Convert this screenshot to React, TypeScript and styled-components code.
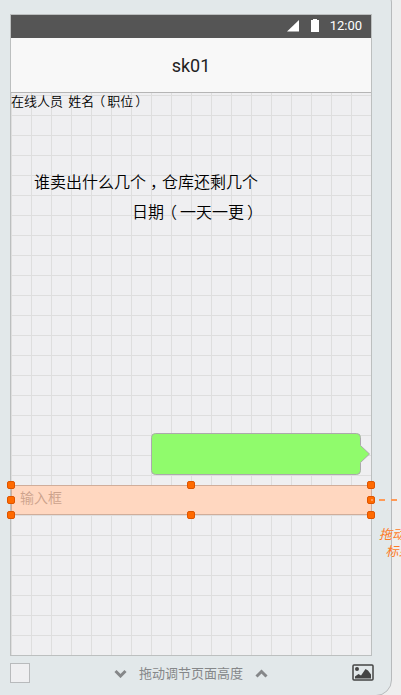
import React from "react";
import styled, { createGlobalStyle } from "styled-components";

const Global = createGlobalStyle`
  * { box-sizing: border-box; }
  html, body { margin: 0; height: 695px; overflow: hidden; background: #eeeeee; }
  body { font-family: "Noto Sans CJK SC", sans-serif; }
`;

const Stage = styled.main`
  width: 401px;
  height: 695px;
  overflow: hidden;
  position: relative;
`;

const Device = styled.section`
  width: 442px;
  height: 710px;
  margin: -14px 0 0 -50px;
  padding: 28px 19px 0 60px;
  background: #e2e8ea;
  border: 1px solid #b8babc;
  border-radius: 16px;
  display: flex;
  flex-direction: column;
`;

const Screen = styled.div`
  width: 362px;
  height: 642px;
  margin: -1px 0 0 -1px;
  flex: none;
  border: 1px solid #bcbfbf;
  background:
    linear-gradient(#dedede 1px, transparent 1px) 0 0 / 20px 20px,
    linear-gradient(90deg, #dedede 1px, transparent 1px) 0 0 / 20px 20px,
    #efeff1;
  display: flex;
  flex-direction: column;
`;

const StatusBar = styled.div`
  height: 23px;
  flex: none;
  padding-right: 9px;
  background: #555;
  color: #fff;
  display: flex;
  align-items: center;
  justify-content: flex-end;
  font: 400 13px/21px Roboto, sans-serif;
`;

const Clock = styled.span`
  height: 23px;
`;

const StatusIcons = styled.svg`
  margin: -3px 10px 0 0;
`;

const TitleBar = styled.header`
  height: 55px;
  flex: none;
  background: #f8f8f8;
  border-bottom: 1px solid #b5b5b5;
  color: #222;
  text-align: center;
  font: 400 18px/55px Roboto, sans-serif;
`;

const Members = styled.div`
  height: 16px;
  font-size: 13px;
  font-weight: 350;
  line-height: 15px;
  color: #000;
  white-space: pre;
  word-spacing: 2.4px;
`;

const Note = styled.div`
  margin: 57px 0 0 23px;
  width: 226px;
  font-size: 16px;
  font-weight: 350;
  line-height: 30px;
  white-space: nowrap;
  color: #000;
`;

const NoteDate = styled.div`
  padding-left: 98px;
`;

/* Full-width punctuation centred in its cell. */
const Mark = styled.span<{ $shift: number }>`
  margin-left: ${({ $shift }) => $shift}px;
  margin-right: ${({ $shift }) => -$shift}px;
`;

const Bubble = styled.svg`
  margin: 207px 0 0 140px;
  flex: none;
  display: block;
`;

const Field = styled.div`
  position: relative;
  height: 30px;
  margin-top: 10px;
  padding-left: 8px;
  flex: none;
  width: 361px;
  background: #ffd7c0;
  border: 1px solid #d0ad9a;
  border-radius: 5px;
  color: #cca28c;
  font-size: 14px;
  font-weight: 350;
  line-height: 23px;
`;

const Handle = styled.i<{ $col: number; $row: number }>`
  position: absolute;
  left: ${({ $col }) => $col * 180 - 5}px;
  top: ${({ $row }) => $row * 15 - 5}px;
  width: 8px;
  height: 8px;
  background: #ff6a00;
  border: 1px solid #de5500;
  border-radius: 2px;
`;

const Footer = styled.footer`
  height: 34px;
  width: 364px;
  display: flex;
  align-items: center;
  color: #858789;
  font-size: 13px;
  line-height: 20px;
  white-space: nowrap;
`;

const Swatch = styled.span`
  width: 20px;
  height: 20px;
  margin-left: -1px;
  border: 1px solid #b8babc;
  background: #efeff1;
`;

const HeightControl = styled.div`
  margin-left: 84px;
  display: flex;
  align-items: center;
  gap: 12px;
`;

const PictureIcon = styled.svg`
  margin: -2px 0 0 84px;
`;

const Leader = styled.div`
  position: absolute;
  left: 371px;
  top: 499px;
  width: 60px;
  height: 2px;
  background: repeating-linear-gradient(90deg, #ff9a57 0 6px, transparent 6px 12px);
  background-position: -4px 0;
`;

const Hint = styled.p`
  position: absolute;
  left: 379px;
  top: 525px;
  width: 52px;
  margin: 0;
  color: #ff7a25;
  font-size: 13px;
  font-style: italic;
  line-height: 17px;
  text-align: center;
  white-space: pre;
`;

const handles = [[0, 0], [1, 0], [2, 0], [0, 1], [2, 1], [0, 2], [1, 2], [2, 2]];

export default function App() {
  return (
    <Stage>
      <Global />
      <Device>
        <Screen>
          <StatusBar>
            <StatusIcons width="33" height="14" viewBox="0 0 33 14">
              <path d="M0 13.500 12 2v11.500Z" fill="#fff" />
              <path d="M24 2h2V1h4v1h2v12h-8Z" fill="#fff" />
            </StatusIcons>
            <Clock>12:00</Clock>
          </StatusBar>
          <TitleBar>sk01</TitleBar>
          <Members>
            在线人员 姓名<Mark $shift={-2}>（</Mark>职位<Mark $shift={2}>）</Mark>
          </Members>
          <Note>
            谁卖出什么几个<Mark $shift={4}>，</Mark>仓库还剩几个
            <NoteDate>
              日期<Mark $shift={-3}>（</Mark>一天一更<Mark $shift={3}>）</Mark>
            </NoteDate>
          </Note>
          <Bubble width="220" height="42" viewBox="0 0 220 42">
            <path
              d="M4.500 .5H205.500a4 4 0 0 1 4 4V12.500L218.500 21 209.500 29.500V37.500a4 4 0 0 1-4 4H4.500a4 4 0 0 1-4-4V4.500a4 4 0 0 1 4-4Z"
              fill="#90fb6c"
              stroke="#abaaab"
            />
          </Bubble>
          <Field>
            输入框
            {handles.map(([c, r]) => <Handle key={`${c}-${r}`} $col={c} $row={r} />)}
          </Field>
        </Screen>
        <Footer>
          <Swatch />
          <HeightControl>
            <svg width="13" height="9" viewBox="0 0 13 9">
              <path d="M1.500 2 6.500 7 11.500 2" fill="none" stroke="#858789" strokeWidth="3" />
            </svg>
            <span>拖动调节页面高度</span>
            <svg width="13" height="9" viewBox="0 0 13 9">
              <path d="M1.500 7.500 6.500 2.500 11.500 7.500" fill="none" stroke="#858789" strokeWidth="3" />
            </svg>
          </HeightControl>
          <PictureIcon width="22" height="17" viewBox="0 0 22 17">
            <rect x="1" y="1" width="20" height="15" rx="1" fill="none" stroke="#444" strokeWidth="1.500" />
            <circle cx="5" cy="5" r="2" fill="#444" />
            <path d="M3 14.500v-2l3.500-2.500 2.500 1.500L13.500 5 16 6.500l3 4v4Z" fill="#444" />
          </PictureIcon>
        </Footer>
      </Device>
      <Leader />
      <Hint>{"拖动图标\n标到页"}</Hint>
    </Stage>
  );
}
